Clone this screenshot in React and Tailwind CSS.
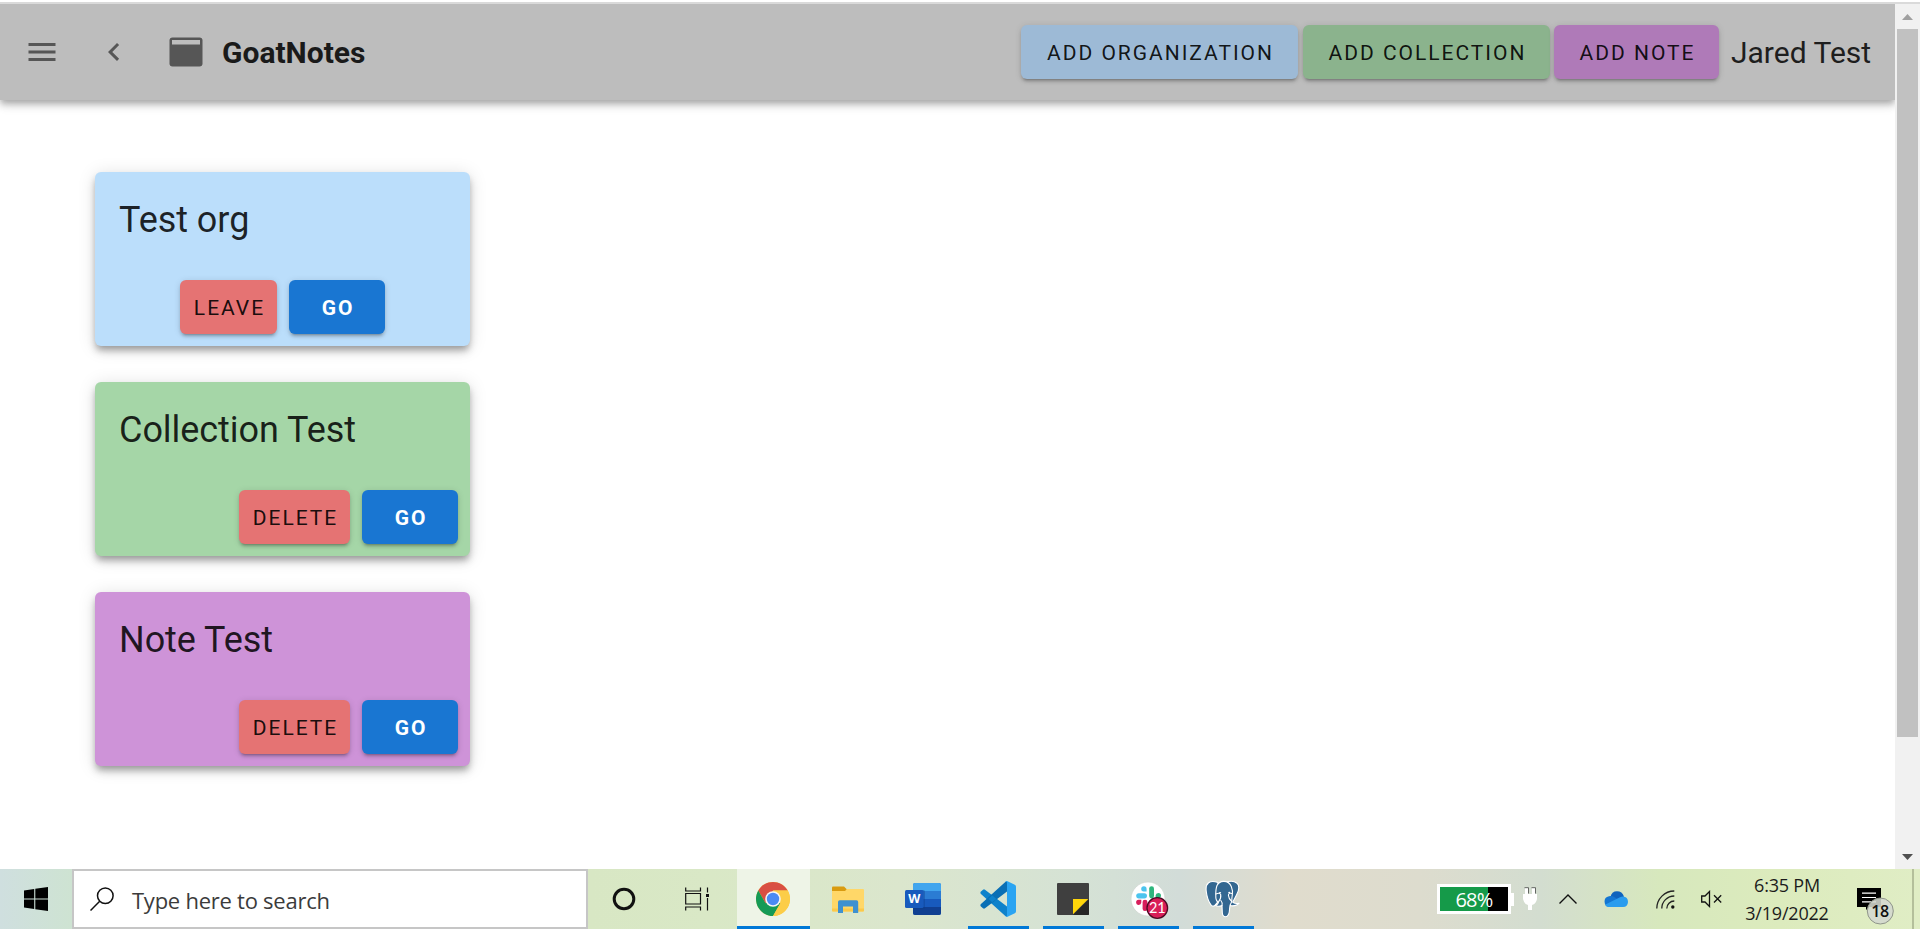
import React from "react";

const BTN_SHADOW =
  "shadow-[0_4px_2px_-3px_rgba(0,0,0,0.2),0_3px_3px_0_rgba(0,0,0,0.14),0_1px_7px_0_rgba(0,0,0,0.12)]";

function Button({ className, children }) {
  return (
    <button
      className={`flex h-[54px] shrink-0 items-center justify-center rounded-[6px] pt-[3px] pl-0.5 text-[21px] leading-none ${BTN_SHADOW} ${className}`}
    >
      {children}
    </button>
  );
}

function AppBar() {
  return (
    <header className="flex h-24 items-center bg-[#bdbdbd] pr-6 shadow-[0_3px_6px_-1px_rgba(0,0,0,0.2),0_6px_7px_0_rgba(0,0,0,0.14),0_1px_15px_0_rgba(0,0,0,0.12)]">
      <svg className="ml-6 size-9 shrink-0" viewBox="0 0 24 24" fill="#565656">
        <path d="M3 6h18v2H3V6m0 5h18v2H3v-2m0 5h18v2H3v-2Z" />
      </svg>
      <svg className="ml-9 size-9 shrink-0" viewBox="0 0 24 24" fill="#565656">
        <path d="M15.41 16.58 10.83 12l4.58-4.59L14 6l-6 6 6 6 1.41-1.42Z" />
      </svg>
      <svg className="ml-[37px] h-[30px] w-[34px] shrink-0" viewBox="0 0 34 30">
        <rect x="0.5" y="0.5" width="33" height="29" rx="3" fill="#565656" />
        <rect x="3" y="3" width="28" height="4.5" fill="#bdbdbd" />
      </svg>
      <h1 className="ml-[19px] pt-0.5 text-[30px] font-bold leading-none text-[#1a1a1a]">GoatNotes</h1>
      <div className="ml-auto flex items-center text-black/90">
        <Button className="w-[277px] bg-[#9dbad6] tracking-[1.98px]">ADD ORGANIZATION</Button>
        <Button className="ml-[5px] w-[247px] bg-[#8bb38d] tracking-[1.98px]">ADD COLLECTION</Button>
        <Button className="ml-1 w-[165px] bg-[#af7ab8] tracking-[1.98px]">ADD NOTE</Button>
        <span className="ml-3 w-[140px] whitespace-nowrap pt-0.5 text-[30px] leading-none text-[#1e1e1e]">Jared Test</span>
      </div>
    </header>
  );
}

function Card({ title, color, action, actionWidth, align }) {
  return (
    <section
      className={`flex h-[174px] w-[375px] flex-col justify-between rounded-[6px] pb-3 shadow-[0_5px_6px_-2px_rgba(0,0,0,0.25),0_6px_9px_0_rgba(0,0,0,0.14),0_2px_18px_0_rgba(0,0,0,0.13)] ${color}`}
    >
      <h2 className="px-6 pt-6 text-[36px] leading-[48px] tracking-[-0.05px] text-black/85">{title}</h2>
      <div className={`flex gap-3 ${align}`}>
        <Button className={`bg-[#e57373] tracking-[1.98px] text-black/90 ${actionWidth}`}>{action}</Button>
        <Button className="w-24 bg-[#1976d2] font-bold tracking-[1.875px] text-white">GO</Button>
      </div>
    </section>
  );
}

function Scrollbar() {
  return (
    <div className="flex w-[25px] shrink-0 flex-col items-center bg-[#f1f1f1]">
      <svg className="h-[25px] w-[25px] shrink-0" viewBox="0 0 25 25">
        <path d="M7 16 12.5 10 18 16Z" fill="#a0a0a0" />
      </svg>
      <div className="h-[708px] w-[21px] bg-[#c1c1c1]" />
      <svg className="mt-auto h-[25px] w-[25px] shrink-0" viewBox="0 0 25 25">
        <path d="M7 10h11L12.5 16Z" fill="#505050" />
      </svg>
    </div>
  );
}

function Task({ active, open, width = "w-[75px]", children }) {
  return (
    <div className={`flex h-full shrink-0 flex-col items-center ${width} ${active ? "bg-[#eef4e7]" : ""}`}>
      <div className="flex h-[57px] items-center pr-0.5 pt-[3px]">{children}</div>
      {active && <div className="h-[3px] w-full bg-[#0078d7]" />}
      {open && <div className="h-[3px] w-[61px] bg-[#0078d7]" />}
    </div>
  );
}

function StartIcon() {
  return (
    <svg className="size-6" viewBox="0 0 24 24">
      <path d="M0 3.4 10.2 1.9V11.4H0ZM11.3 1.7 24 0V11.4H11.3ZM0 12.6H10.2V22.1L0 20.6ZM11.3 12.6H24V24L11.3 22.3Z" fill="#000" />
    </svg>
  );
}

function ChromeIcon() {
  return (
    <svg className="size-[34px]" viewBox="0 0 34 34">
      <circle cx="17" cy="17" r="17" fill="#fccd48" />
      <path d="M17 8.5H31.72A17 17 0 0 0 2.28 8.5L9.64 21.25Z" fill="#d94f43" />
      <path d="M2.28 8.5A17 17 0 0 0 17 34L24.36 21.25 17 17 9.64 21.25Z" fill="#159a56" />
      <path d="M17 34A17 17 0 0 0 31.72 8.5H17L24.36 21.25Z" fill="#fccd48" />
      <circle cx="17" cy="17" r="7.8" fill="#f5f5f5" />
      <circle cx="17" cy="17" r="6.2" fill="#4a8af4" />
    </svg>
  );
}

function ExplorerIcon() {
  return (
    <svg className="h-[27px] w-8" viewBox="0 0 32 27">
      <path d="M0 1.5Q0 .5 1 .5H12L15 3.5V9H0Z" fill="#d99b10" />
      <path d="M0 5H13L15 3H31Q32 3 32 4V24.5Q32 25.5 31 25.5H1Q0 25.5 0 24.5Z" fill="#ffd768" />
      <path d="M0 22.5H32V24.5Q32 25.5 31 25.5H1Q0 25.5 0 24.5Z" fill="#fbc94b" />
      <path d="M6 27V16Q6 14.3 7.7 14.3H24.5Q26.2 14.3 26.2 16V27H21V20.5H11V27Z" fill="#3f91d0" />
    </svg>
  );
}

function WordIcon() {
  return (
    <svg className="h-8 w-9" viewBox="0 0 36 32">
      <rect x="8" width="28" height="32" rx="2" fill="#2b7cd3" />
      <path d="M10 0H34Q36 0 36 2V8H8V2Q8 0 10 0Z" fill="#41a5ee" />
      <path d="M8 16H36V24H8Z" fill="#185abd" />
      <path d="M8 24H36V30Q36 32 34 32H10Q8 32 8 30Z" fill="#103f91" />
      <path d="M8 7H18.5Q20 7 20 8.5V26H8Z" fill="#0b3c86" opacity=".35" />
      <rect y="7" width="18.5" height="18" rx="1.5" fill="#185abd" />
      <text x="9.3" y="20.4" textAnchor="middle" fontFamily="Open Sans, sans-serif" fontSize="12.5" fontWeight="700" fill="#fff">W</text>
    </svg>
  );
}

function CodeIcon() {
  return (
    <svg className="size-9" viewBox="0 0 36 36">
      <path d="M.7 10.8 3 8.7Q4 8 5 8.7L27 25.5V35.8Q26.2 36 25.3 35.1L.7 12.8Q0 11.8.7 10.8Z" fill="#0f82cb" />
      <path d="M.7 25.2 3 27.3Q4 28 5 27.3L27 10.5V.2Q26 .1 25.3.9L.7 23.2Q0 24.2.7 25.2Z" fill="#0a6fb5" />
      <path d="M12.2 14.2 16.4 18 12.2 21.2 8.6 18Z" fill="#0f82cb" />
      <path d="M26.2.1Q26.8-.1 27.5.3L34.8 3.8Q36 4.4 36 5.7V30.3Q36 31.6 34.8 32.2L27.5 35.7Q26.3 36.3 25.3 35.1 27 36 27 33.9V2.1Q27 0 25.3.9Z" fill="#2aa4f2" />
    </svg>
  );
}

function StickyIcon() {
  return (
    <svg className="size-8" viewBox="0 0 32 32">
      <rect width="32" height="32" rx="1" fill="#3f3f3f" />
      <path d="M16 32 32 16V31Q32 32 31 32Z" fill="#262626" />
      <path d="M16 16H31.3L16 31.3Z" fill="#ffd60a" />
    </svg>
  );
}

function SlackIcon() {
  return (
    <svg className="h-[38px] w-[38px] translate-y-px" viewBox="0 0 38 38">
      <circle cx="17" cy="18" r="17" fill="#fff" stroke="#cfd4cf" strokeWidth=".7" />
      <g fill="#4cc4ee">
        <path d="M15.6 10.6H12.8A2.7 2.7 0 1 1 15.6 7.9Z" />
        <rect x="5.2" y="12.2" width="10.8" height="5.3" rx="2.65" />
      </g>
      <g fill="#2eb67d">
        <rect x="18.2" y="5.2" width="4.8" height="12.2" rx="2.4" />
        <path d="M24.6 17.3V14.4A2.7 2.7 0 1 1 27.4 17.3Z" />
      </g>
      <g fill="#d81e5b">
        <path d="M10.3 18.7V21.4A2.6 2.6 0 1 1 7.6 18.7Z" />
        <rect x="11.6" y="18.7" width="4.8" height="11.4" rx="2.4" />
      </g>
      <rect x="18" y="18.8" width="11" height="4.6" rx="2.3" fill="#ecb22e" />
      <circle cx="26.3" cy="27" r="10.3" fill="#d91e58" stroke="#4c0a22" strokeWidth="1.3" />
      <text x="26.3" y="32" textAnchor="middle" fontFamily="Lato, sans-serif" fontSize="14.5" fill="#fff">21</text>
    </svg>
  );
}

function PostgresIcon() {
  return (
    <svg className="h-[38px] w-9" viewBox="0 0 36 38" fill="#336791" stroke="#fff" strokeWidth="1.1" strokeLinejoin="round" strokeLinecap="round">
      <path d="M13 2.6Q7 .2 3.6 2.8.5 5.2 1.2 11 2.3 20.5 6.3 25.3 8.5 27.3 10.6 24.6L13.5 21Z" />
      <path d="M21 2.3Q27.8-.2 32 3.2 35.8 7 31.6 14.8 29.5 19 27.7 22.2 29.2 24.1 34 23.2 31.8 26.2 26 25.8L21 22Z" />
      <path d="M12 5.5Q14 1.6 18.5 1.4 24 1.2 26.3 6.5 28 10.5 27.3 15 26.6 18.5 26.8 21.5 24.8 24.5 24.6 28.5 24.4 36.8 20.5 36.8 17.5 36.8 17.3 32.5L17 25.5Q13 27.2 10.3 25.3 13.2 24.6 13.3 22.3 10.5 20.5 10.8 16 10.6 9 12 5.5Z" />
      <path d="M10.9 14Q14.6 12.3 15.7 14.6 16.4 18.2 13.4 22.2M17 25.5Q17.8 22.8 15.9 20.5M26.9 13.5Q23.7 12.4 23.4 15.2 23.6 18.6 26.7 21.5" fill="none" />
      <ellipse cx="15" cy="12.7" rx="1.2" ry=".6" fill="#fff" stroke="none" />
      <ellipse cx="24.3" cy="12.4" rx="1.1" ry=".6" fill="#fff" stroke="none" />
    </svg>
  );
}

function Taskbar() {
  return (
    <footer
      className="flex h-[60px] shrink-0 bg-[linear-gradient(90deg,#cfdfdf_0px,#cee3d2_72px,#d8e7c4_590px,#d9e8c6_710px,#dbe6cd_900px,#d5e2d5_1080px,#d2dcd8_1180px,#e0dccd_1290px,#dddcce_1420px,#d3ddd0_1540px,#d7e8bd_1660px,#dcebbd_1780px,#e0edc5_1920px)] [font-family:'Open_Sans','Noto_Sans',sans-serif]"
    >
      <div className="flex w-[72px] shrink-0 items-center justify-center">
        <StartIcon />
      </div>
      <div className="flex w-[516px] shrink-0 items-center border-2 border-[#c6c6c6] bg-white">
        <svg className="mb-px ml-4 size-6" viewBox="0 0 24 24" fill="none" stroke="#111" strokeWidth="1.5">
          <circle cx="15.3" cy="8.7" r="7.8" />
          <path d="M9.7 14.3.5 23.5" />
        </svg>
        <span className="ml-[18px] whitespace-nowrap pt-0.5 text-[22px] leading-none tracking-[-0.25px] text-[#3b3b3b]">Type here to search</span>
      </div>
      <Task width="w-[73px]">
        <svg className="size-6" viewBox="0 0 24 24">
          <circle cx="12" cy="12" r="9.8" fill="none" stroke="#111" strokeWidth="3" />
        </svg>
      </Task>
      <Task width="w-[76px] pr-px">
        <svg className="h-6 w-[25px]" viewBox="0 0 25 24" fill="none" stroke="#111" strokeWidth="1.2">
          <path d="M.7.5V4H15.5V.5M.7 23.5V20H15.5V23.5M.7 6.5H15.5V17H.7ZM22.5.5V5.5M22.5 11V23.5" />
          <rect x="21" y="7" width="3" height="3" fill="#111" stroke="none" />
        </svg>
      </Task>
      <Task active width="w-[73px]"><ChromeIcon /></Task>
      <Task width="ml-px w-[75px]"><ExplorerIcon /></Task>
      <Task><WordIcon /></Task>
      <Task open><CodeIcon /></Task>
      <Task open><StickyIcon /></Task>
      <Task open><div className="ml-[5px]"><SlackIcon /></div></Task>
      <Task open><PostgresIcon /></Task>

      <div className="ml-auto flex items-center">
        <div className="flex items-center">
          <div className="flex h-[30px] w-[74px] items-center justify-center border-[3px] border-white bg-[linear-gradient(90deg,#159a49_48px,#000_48px)]">
            <span className="pt-0.5 text-[20px] leading-none tracking-[-0.8px] text-white">68%</span>
          </div>
          <div className="h-[13px] w-[3px] bg-white" />
        </div>
        <svg className="ml-[9px] h-6 w-[14px]" viewBox="0 0 14 24" fill="#fff">
          <path d="M2 1H5V7H9V1H12V7H14V12Q13 17 9 18V23H5V18Q1 17 0 12V7H2Z" />
          <path d="M1.5.7H5.5V6.5M8.5.7H12.5V6.5" fill="none" stroke="#333" strokeWidth=".7" />
        </svg>
        <svg className="ml-[22px] h-3 w-[18px]" viewBox="0 0 18 12" fill="none" stroke="#111" strokeWidth="1.4">
          <path d="M.5 10.5 9 2 17.5 10.5" />
        </svg>
        <svg className="ml-[27px] h-4 w-6" viewBox="0 0 24 16">
          <path d="M6.5 6Q7.5.3 13 .3 18.2.3 20 5.5L12 11Z" fill="#0f63bd" />
          <path d="M5.5 16A5.4 5.4 0 0 1 5 5.3Q8 4.6 11 6.5L19 12 12 16Z" fill="#1476d2" />
          <path d="M19 5.5Q24 5.8 24 11 23.7 16 19 16H5Q2 16 1 13.8L16 6.3Q17.5 5.5 19 5.5Z" fill="#2a9cee" />
        </svg>
        <svg className="ml-7 h-[19px] w-[19px]" viewBox="0 0 19 19" fill="none" stroke="#222" strokeWidth="1.3">
          <path d="M.8 18.5A17.5 17.5 0 0 1 18.3 1M5.8 18.5A12.5 12.5 0 0 1 18.3 6M10.8 18.5A7.5 7.5 0 0 1 18.3 11" />
          <circle cx="16.8" cy="17" r="1.7" fill="#111" stroke="none" />
        </svg>
        <svg className="ml-[26px] h-[18px] w-[21px]" viewBox="0 0 21 18" fill="none" stroke="#111" strokeWidth="1.3">
          <path d="M.7 6H4L8.5 1.5V16.5L4 12H.7ZM13 5.3 20.2 12.5M20.2 5.3 13 12.5" />
        </svg>
        <div className="ml-[23px] flex w-[84px] flex-col items-center whitespace-nowrap text-[18px] leading-[28px] tracking-[-0.2px] text-[#1b1b1b]">
          <span>6:35 PM</span>
          <span>3/19/2022</span>
        </div>
        <svg className="ml-[28px] mt-[13px] h-[38px] w-[38px]" viewBox="0 0 38 38">
          <path d="M0 1H24V20H12L9 23V20H0Z" fill="#000" />
          <path d="M5 6.2H19M5 10.5H19M5 14.8H19" stroke="#fff" strokeWidth="1.2" />
          <circle cx="23.3" cy="24" r="13" fill="#d4d8cf" fillOpacity=".88" stroke="#8f958a" strokeWidth="1" />
          <text x="23" y="29.8" textAnchor="middle" fontFamily="Open Sans, sans-serif" fontSize="16" fontWeight="600" letterSpacing="-.4" fill="#111">18</text>
        </svg>
        <div className="ml-[17px] mr-1.5 h-[60px] w-0.5 bg-[#b4bf9b]" />
      </div>
    </footer>
  );
}

export default function App() {
  return (
    <div className="flex h-[929px] w-[1920px] flex-col overflow-hidden bg-white [font-family:Roboto,sans-serif]">
      <div className="mt-0.5 h-0.5 shrink-0 bg-[#dadada]" />
      <div className="flex h-[865px] shrink-0">
        <div className="flex-1 overflow-hidden">
          <AppBar />
          <main className="flex flex-col gap-9 pl-[95px] pt-[72px]">
            <Card title="Test org" color="bg-[#bbdefb]" action="LEAVE" actionWidth="w-[97px]" align="pl-[85px]" />
            <Card title="Collection Test" color="bg-[#a5d6a7]" action="DELETE" actionWidth="w-[111px]" align="justify-end pr-3" />
            <Card title="Note Test" color="bg-[#ce93d8]" action="DELETE" actionWidth="w-[111px]" align="justify-end pr-3" />
          </main>
        </div>
        <Scrollbar />
      </div>
      <Taskbar />
    </div>
  );
}
